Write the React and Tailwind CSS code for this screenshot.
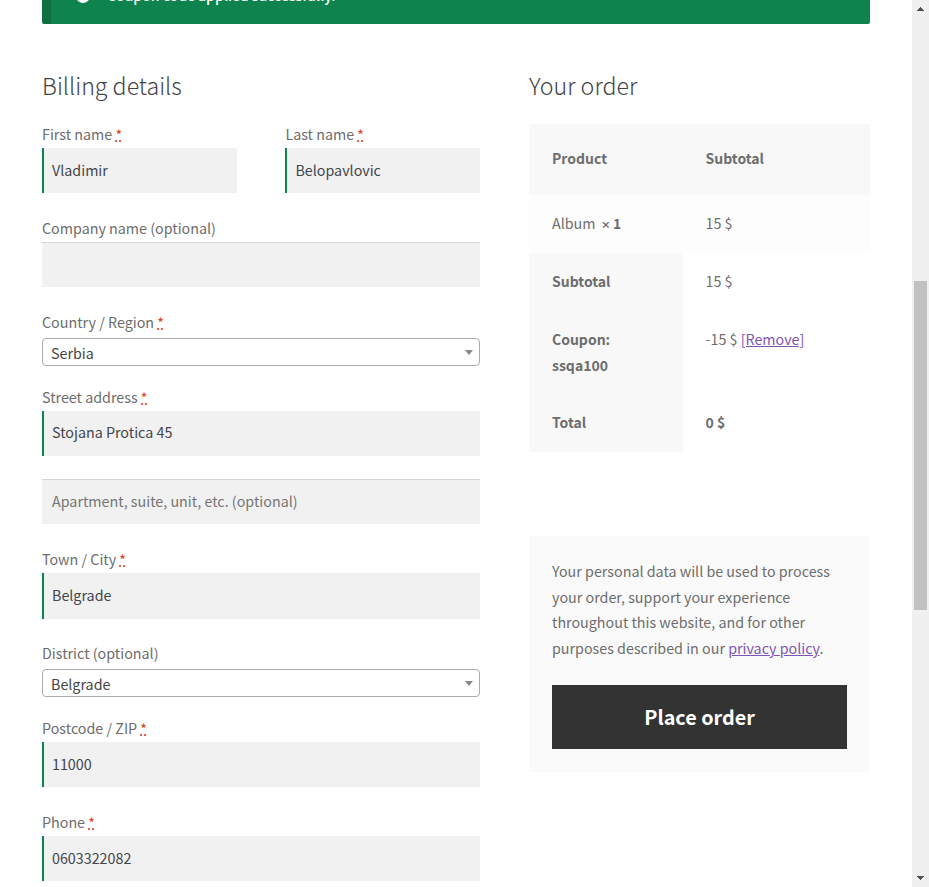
const Required = () => (
  <abbr title="required" className="ml-[3px] flex h-5 w-[6px] flex-col items-center justify-between text-[#e2401c] no-underline">
    <span className="block h-[14px] pl-px leading-[25px]">*</span>
    <span className="flex w-[6px] justify-between">
      <span className="h-[2px] w-[2px] bg-[#e8624a]" />
      <span className="h-[2px] w-[2px] bg-[#e8624a]" />
    </span>
  </abbr>
);

const Label = ({ children, required }) => (
  <div className="flex h-[26px] items-start leading-[24px] whitespace-pre">
    <span>{children}</span>
    {required && <Required />}
  </div>
);

const Input = ({ value, placeholder, tall, raised }) => (
  <div
    className={`flex items-center bg-[#f1f1f1] ${tall ? "h-[46px]" : "h-[45px]"} ${raised ? "pb-1" : "pb-[2px]"} ${
      value ? "border-l-2 border-[#0f834d] pl-2 text-[#43454b]" : "border-t border-[#d4d6d5] pl-[10px] text-[#757575]"
    }`}
  >
    <span className="whitespace-pre">{value || placeholder}</span>
  </div>
);

const Select = ({ value }) => (
  <div className="mt-[2px] flex h-7 items-center justify-between rounded-[4px] border border-[#aaa] bg-white pr-[6px] pl-2 text-[#444]">
    <span className="pt-[2px]">{value}</span>
    <svg width="8" height="5" viewBox="0 0 8 5" className="mt-px">
      <path d="M0 0H8L4 5Z" fill="#888" />
    </svg>
  </div>
);

const Notice = () => (
  <div className="flex h-6 rounded-b-[2px] border-l-[9px] border-[#0d6f42] bg-[#0f834d] pl-[25px] text-white">
    <div className="-mt-[11px] h-[14px] w-[14px] rounded-full bg-white" />
    <span className="-mt-[18px] ml-[17px] text-[14px] font-medium whitespace-pre">Coupon code applied successfully.</span>
  </div>
);

export default function App() {
  return (
    <div className="flex h-[887px] w-[929px] justify-between overflow-hidden bg-white font-['Noto_Sans_CJK_SC',sans-serif] text-[14.3px] leading-[26px] text-[#6d6d6d]">
      <main className="ml-[42px] w-[828px]">
        <Notice />
        <div className="flex justify-between">
          <section className="w-[438px]">
            <h3 className="mt-[40px] h-[58px] text-[23.2px] leading-[42px] font-light text-[#444]">Billing details</h3>
            <div className="flex justify-between">
              <div className="w-[195px]">
                <Label required>First name</Label>
                <Input value="Vladimir" />
              </div>
              <div className="w-[194.6px]">
                <Label required>Last name</Label>
                <Input value="Belopavlovic" />
              </div>
            </div>
            <div className="mt-[23px]">
              <Label>Company name (optional)</Label>
              <Input />
            </div>
            <div className="mt-[23px]">
              <Label required>Country / Region</Label>
              <Select value="Serbia" />
            </div>
            <div className="mt-[19px]">
              <Label required>Street address</Label>
              <Input value="Stojana Protica 45" raised />
            </div>
            <div className="mt-[23px]">
              <Input placeholder="Apartment, suite, unit, etc. (optional)" />
            </div>
            <div className="mt-[23px]">
              <Label required>Town / City</Label>
              <Input value="Belgrade" tall />
            </div>
            <div className="mt-[22px]">
              <Label>District (optional)</Label>
              <Select value="Belgrade" />
            </div>
            <div className="mt-[19px]">
              <Label required>Postcode / ZIP</Label>
              <Input value="11000" />
            </div>
            <div className="mt-[23px]">
              <Label required>Phone</Label>
              <Input value="0603322082" />
            </div>
          </section>

          <section className="w-[341px]">
            <h3 className="mt-[40px] h-[60px] text-[23.2px] leading-[42px] font-light text-[#444]">Your order</h3>
            <div className="grid grid-cols-[154px_187px] grid-rows-[71px_58px_58px_83px_58px]">
              <div className="bg-[#f8f8f8] pt-[21px] pl-[23px] text-[14px] font-semibold">Product</div>
              <div className="bg-[#f8f8f8] pt-[21px] pl-[22.5px] text-[14px] font-semibold">Subtotal</div>
              <div className="flex bg-[#fdfdfd] pt-[15px] pl-[23px] whitespace-pre">
                Album
                <strong className="ml-[6px] flex text-[14px] font-semibold">
                  <span className="mr-[3px] pt-px font-['Open_Sans',sans-serif] text-[15px]">×</span>
                  <span>1</span>
                </strong>
              </div>
              <div className="bg-[#fdfdfd] pt-[15px] pl-[22.5px]">15 $</div>
              <div className="bg-[#f8f8f8] pt-[15px] pl-[23px] text-[14px] font-semibold">Subtotal</div>
              <div className="pt-[15px] pl-[22.5px]">15 $</div>
              <div className="bg-[#f8f8f8] pt-[15px] pl-[23px] text-[14px] font-semibold">
                Coupon:
                <br />
                ssqa100
              </div>
              <div className="pt-[15px] pl-[22.5px]">
                -15 $ <a className="text-[#7f54b3] underline">[Remove]</a>
              </div>
              <div className="bg-[#f8f8f8] pt-[15px] pl-[23px] text-[14px] font-semibold">Total</div>
              <div className="pt-[15px] pl-[22.5px] text-[14px] font-semibold">0 $</div>
            </div>

            <div className="mt-[84px] h-[236px] bg-[#fafafa] px-[23px] pt-[22px]">
              <p className="h-[127px] leading-[25.7px] whitespace-nowrap">
                Your personal data will be used to process
                <br />
                your order, support your experience
                <br />
                throughout this website, and for other
                <br />
                purposes described in our <a className="text-[#7f54b3] underline">privacy policy</a>.
              </p>
              <button className="block h-16 w-[295px] bg-[#333] text-[19.8px] font-semibold text-white">Place order</button>
            </div>
          </section>
        </div>
      </main>

      <div className="flex w-[17px] flex-col items-center bg-[#f0f0f0]">
        <svg width="7" height="4" viewBox="0 0 7 4" className="mt-[7px]" shapeRendering="crispEdges">
          <path d="M3 0h1v1h1v1h1v1h1v1H0V3h1V2h1V1h1z" fill="#505050" />
        </svg>
        <div className="mt-[270px] h-[329px] w-[13px] bg-[#c1c1c1]" />
        <svg width="7" height="4" viewBox="0 0 7 4" className="mt-auto mb-[7px]" shapeRendering="crispEdges">
          <path d="M0 0h7v1H6v1H5v1H4v1H3V3H2V2H1V1H0z" fill="#505050" />
        </svg>
      </div>
    </div>
  );
}
